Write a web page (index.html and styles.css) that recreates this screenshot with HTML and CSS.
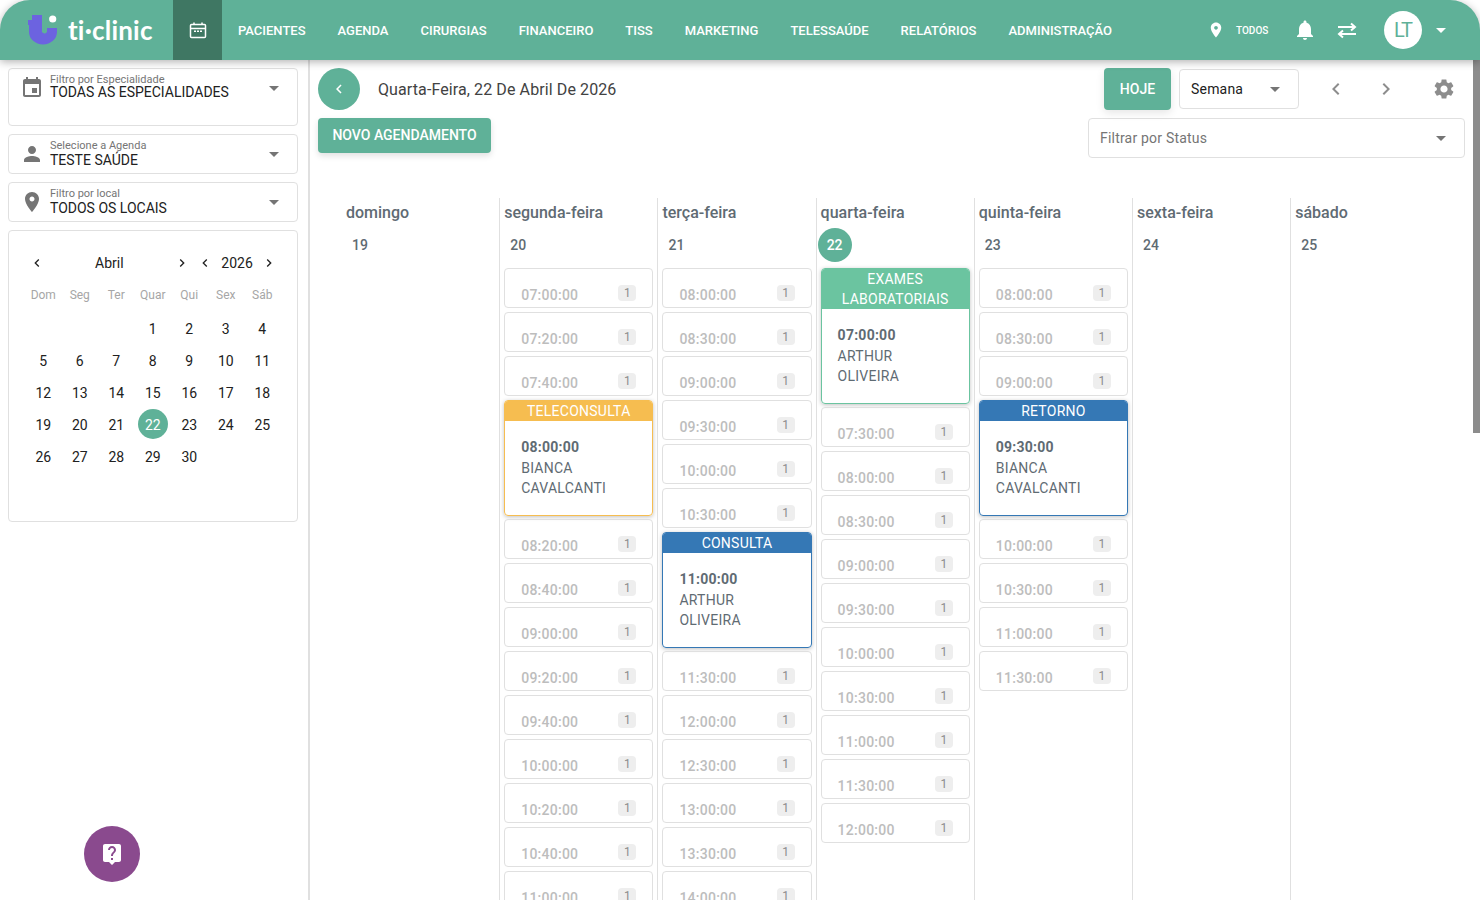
FILE: index.html
```html
<!DOCTYPE html>
<html lang="pt-BR">
<head>
<meta charset="utf-8">
<title>ti-clinic</title>
<link rel="stylesheet" href="styles.css">
</head>
<body>
<header class="topbar">
  <div class="brand">
    <svg class="brand-mark" width="30" height="30" viewBox="0 0 30 30"><path class="mark-p" d="M4 0h10v5h0v10a2.5 2.5 0 0 0 5 1.500v-3.500h10v4a14 12.500 0 0 1-28 0v-7h-1v-5h4z"/><circle class="mark-w" cx="24.700" cy="4" r="3.600"/></svg>
    <span class="brand-name">ti·clinic</span>
  </div>
  <a class="nav-cal"><svg width="20" height="20" viewBox="0 0 20 20"><path class="cal-line" d="M3.500 4.500h13a1 1 0 0 1 1 1v11a1 1 0 0 1-1 1h-13a1 1 0 0 1-1-1v-11a1 1 0 0 1 1-1zM3 8.500h14M6 2.500v2M14 2.500v2"/><path class="cal-dots" d="M6 10.500h2v1.500h-2zM9 10.500h2v1.500h-2zM12 10.500h2v1.500h-2z"/></svg></a>
  <nav class="nav">
    <a>PACIENTES</a><a>AGENDA</a><a>CIRURGIAS</a><a>FINANCEIRO</a><a>TISS</a><a>MARKETING</a><a>TELESSAÚDE</a><a>RELATÓRIOS</a><a>ADMINISTRAÇÃO</a>
  </nav>
  <div class="top-tools">
    <svg class="ic-white" width="18" height="18" viewBox="0 0 24 24"><path d="M12 2C8.130 2 5 5.130 5 9c0 5.250 7 13 7 13s7-7.750 7-13c0-3.870-3.130-7-7-7zm0 9.500c-1.380 0-2.500-1.120-2.500-2.500s1.120-2.500 2.500-2.500 2.500 1.120 2.500 2.500-1.120 2.500-2.500 2.500z"/></svg>
    <span class="place-label">TODOS</span>
    <svg class="ic-white bell" width="24" height="24" viewBox="0 0 24 24"><path d="M12 22c1.100 0 2-.9 2-2h-4c0 1.100.89 2 2 2zm6-6v-5c0-3.070-1.640-5.640-4.500-6.320V4c0-.83-.67-1.500-1.500-1.500s-1.500.67-1.500 1.500v.68C7.630 5.360 6 7.920 6 11v5l-2 2v1h16v-1l-2-2z"/></svg>
    <svg class="swap" width="24" height="24" viewBox="0 0 24 24"><path d="M3 9h16M16 5.500l4 3.500-4 3.500M21 16H5M8 12.500L4 16l4 3.500"/></svg>
    <div class="avatar">LT</div>
    <svg class="ic-white caret-top" width="10" height="5" viewBox="0 0 10 5"><path d="M0 0h10L5 5z"/></svg>
  </div>
</header>

<div class="layout">
  <aside class="sidebar">
    <div class="field field-tall">
      <svg class="ic-gray" width="24" height="24" viewBox="0 0 24 24"><path d="M17 12h-5v5h5v-5zM16 1v2H8V1H6v2H5c-1.110 0-1.990.9-1.990 2L3 19c0 1.100.89 2 2 2h14c1.100 0 2-.9 2-2V5c0-1.100-.9-2-2-2h-1V1h-2zm3 18H5V8h14v11z"/></svg>
      <div class="field-text"><div class="field-label">Filtro por Especialidade</div><div class="field-value value-tight">TODAS AS ESPECIALIDADES</div></div>
      <svg class="ic-gray field-caret" width="10" height="5" viewBox="0 0 10 5"><path d="M0 0h10L5 5z"/></svg>
    </div>
    <div class="field">
      <svg class="ic-gray" width="24" height="24" viewBox="0 0 24 24"><path d="M12 12c2.210 0 4-1.790 4-4s-1.790-4-4-4-4 1.790-4 4 1.790 4 4 4zm0 2c-2.670 0-8 1.340-8 4v2h16v-2c0-2.660-5.330-4-8-4z"/></svg>
      <div class="field-text"><div class="field-label">Selecione a Agenda</div><div class="field-value">TESTE SAÚDE</div></div>
      <svg class="ic-gray field-caret" width="10" height="5" viewBox="0 0 10 5"><path d="M0 0h10L5 5z"/></svg>
    </div>
    <div class="field">
      <svg class="ic-gray" width="24" height="24" viewBox="0 0 24 24"><path d="M12 2C8.130 2 5 5.130 5 9c0 5.250 7 13 7 13s7-7.750 7-13c0-3.870-3.130-7-7-7zm0 9.500c-1.380 0-2.500-1.120-2.500-2.500s1.120-2.500 2.500-2.500 2.500 1.120 2.500 2.500-1.120 2.500-2.500 2.500z"/></svg>
      <div class="field-text"><div class="field-label">Filtro por local</div><div class="field-value">TODOS OS LOCAIS</div></div>
      <svg class="ic-gray field-caret" width="10" height="5" viewBox="0 0 10 5"><path d="M0 0h10L5 5z"/></svg>
    </div>

    <div class="mini-cal">
      <div class="mini-head">
        <div class="mini-month">
          <svg class="ic-dark" width="16" height="16" viewBox="0 0 24 24"><path d="M15.410 7.410L14 6l-6 6 6 6 1.410-1.410L10.830 12z"/></svg>
          <span>Abril</span>
          <svg class="ic-dark" width="16" height="16" viewBox="0 0 24 24"><path d="M10 6L8.590 7.410 13.170 12l-4.580 4.590L10 18l6-6z"/></svg>
        </div>
        <div class="mini-year">
          <svg class="ic-dark" width="16" height="16" viewBox="0 0 24 24"><path d="M15.410 7.410L14 6l-6 6 6 6 1.410-1.410L10.830 12z"/></svg>
          <span>2026</span>
          <svg class="ic-dark" width="16" height="16" viewBox="0 0 24 24"><path d="M10 6L8.590 7.410 13.170 12l-4.580 4.590L10 18l6-6z"/></svg>
        </div>
      </div>
      <div class="mini-week"><span>Dom</span><span>Seg</span><span>Ter</span><span>Quar</span><span>Qui</span><span>Sex</span><span>Sáb</span></div>
      <div class="mini-days">
        <span></span><span></span><span></span><span>1</span><span>2</span><span>3</span><span>4</span>
        <span>5</span><span>6</span><span>7</span><span>8</span><span>9</span><span>10</span><span>11</span>
        <span>12</span><span>13</span><span>14</span><span>15</span><span>16</span><span>17</span><span>18</span>
        <span>19</span><span>20</span><span>21</span><span class="sel"><b>22</b></span><span>23</span><span>24</span><span>25</span>
        <span>26</span><span>27</span><span>28</span><span>29</span><span>30</span>
      </div>
    </div>
  </aside>

  <main class="main">
    <div class="toolbar">
      <div class="tool-left">
        <div class="date-row">
          <div class="back"><svg class="ic-white" width="18" height="18" viewBox="0 0 24 24"><path d="M15.410 7.410L14 6l-6 6 6 6 1.410-1.410L10.830 12z"/></svg></div>
          <span class="date-text">Quarta-Feira, 22 De Abril De 2026</span>
        </div>
        <button class="btn-new">NOVO AGENDAMENTO</button>
      </div>
      <div class="tool-right">
        <div class="tool-row">
          <button class="btn-today">HOJE</button>
          <div class="select-view"><span>Semana</span><svg class="ic-gray" width="10" height="5" viewBox="0 0 10 5"><path d="M0 0h10L5 5z"/></svg></div>
          <svg class="ic-mid chev-a" width="24" height="24" viewBox="0 0 24 24"><path d="M15.410 7.410L14 6l-6 6 6 6 1.410-1.410L10.830 12z"/></svg>
          <svg class="ic-mid chev-b" width="24" height="24" viewBox="0 0 24 24"><path d="M10 6L8.590 7.410 13.170 12l-4.580 4.590L10 18l6-6z"/></svg>
          <svg class="ic-mid gear" width="24" height="24" viewBox="0 0 24 24"><path d="M19.140 12.940c.04-.3.06-.61.06-.94 0-.32-.02-.64-.07-.94l2.030-1.580c.18-.14.23-.41.12-.61l-1.920-3.320c-.12-.22-.37-.29-.59-.22l-2.390.96c-.5-.38-1.030-.7-1.620-.94l-.36-2.540c-.04-.24-.24-.41-.48-.41h-3.840c-.24 0-.43.17-.47.41l-.36 2.540c-.59.24-1.130.57-1.620.94l-2.390-.96c-.22-.08-.47 0-.59.22L2.740 8.870c-.12.21-.08.47.12.61l2.030 1.580c-.05.3-.09.63-.09.94s.02.64.07.94l-2.030 1.580c-.18.14-.23.41-.12.61l1.920 3.320c.12.22.37.29.59.22l2.390-.96c.5.38 1.030.7 1.620.94l.36 2.540c.05.24.24.41.48.41h3.840c.24 0 .44-.17.47-.41l.36-2.540c.59-.24 1.130-.56 1.620-.94l2.390.96c.22.08.47 0 .59-.22l1.920-3.320c.12-.22.07-.47-.12-.61l-2.010-1.580zM12 15.600c-1.980 0-3.600-1.620-3.600-3.600s1.620-3.600 3.600-3.600 3.600 1.620 3.600 3.600-1.620 3.600-3.600 3.600z"/></svg>
        </div>
        <div class="select-status"><span>Filtrar por Status</span><svg class="ic-gray" width="10" height="5" viewBox="0 0 10 5"><path d="M0 0h10L5 5z"/></svg></div>
      </div>
    </div>

    <div class="week">
      <section class="day first">
        <h3>domingo</h3><div class="num">19</div>
      </section>
      <section class="day">
        <h3>segunda-feira</h3><div class="num">20</div>
        <div class="slot"><span class="t">07:00:00</span><span class="n">1</span></div>
        <div class="slot"><span class="t">07:20:00</span><span class="n">1</span></div>
        <div class="slot"><span class="t">07:40:00</span><span class="n">1</span></div>
        <article class="event tele"><header>TELECONSULTA</header><div class="ev-body"><strong>08:00:00</strong><p>BIANCA<br>CAVALCANTI</p></div></article>
        <div class="slot"><span class="t">08:20:00</span><span class="n">1</span></div>
        <div class="slot"><span class="t">08:40:00</span><span class="n">1</span></div>
        <div class="slot"><span class="t">09:00:00</span><span class="n">1</span></div>
        <div class="slot"><span class="t">09:20:00</span><span class="n">1</span></div>
        <div class="slot"><span class="t">09:40:00</span><span class="n">1</span></div>
        <div class="slot"><span class="t">10:00:00</span><span class="n">1</span></div>
        <div class="slot"><span class="t">10:20:00</span><span class="n">1</span></div>
        <div class="slot"><span class="t">10:40:00</span><span class="n">1</span></div>
        <div class="slot"><span class="t">11:00:00</span><span class="n">1</span></div>
      </section>
      <section class="day">
        <h3>terça-feira</h3><div class="num">21</div>
        <div class="slot"><span class="t">08:00:00</span><span class="n">1</span></div>
        <div class="slot"><span class="t">08:30:00</span><span class="n">1</span></div>
        <div class="slot"><span class="t">09:00:00</span><span class="n">1</span></div>
        <div class="slot"><span class="t">09:30:00</span><span class="n">1</span></div>
        <div class="slot"><span class="t">10:00:00</span><span class="n">1</span></div>
        <div class="slot"><span class="t">10:30:00</span><span class="n">1</span></div>
        <article class="event blue"><header>CONSULTA</header><div class="ev-body"><strong>11:00:00</strong><p>ARTHUR<br>OLIVEIRA</p></div></article>
        <div class="slot"><span class="t">11:30:00</span><span class="n">1</span></div>
        <div class="slot"><span class="t">12:00:00</span><span class="n">1</span></div>
        <div class="slot"><span class="t">12:30:00</span><span class="n">1</span></div>
        <div class="slot"><span class="t">13:00:00</span><span class="n">1</span></div>
        <div class="slot"><span class="t">13:30:00</span><span class="n">1</span></div>
        <div class="slot"><span class="t">14:00:00</span><span class="n">1</span></div>
      </section>
      <section class="day">
        <h3>quarta-feira</h3><div class="num today">22</div>
        <article class="event lab"><header>EXAMES<br>LABORATORIAIS</header><div class="ev-body"><strong>07:00:00</strong><p>ARTHUR<br>OLIVEIRA</p></div></article>
        <div class="slot"><span class="t">07:30:00</span><span class="n">1</span></div>
        <div class="slot"><span class="t">08:00:00</span><span class="n">1</span></div>
        <div class="slot"><span class="t">08:30:00</span><span class="n">1</span></div>
        <div class="slot"><span class="t">09:00:00</span><span class="n">1</span></div>
        <div class="slot"><span class="t">09:30:00</span><span class="n">1</span></div>
        <div class="slot"><span class="t">10:00:00</span><span class="n">1</span></div>
        <div class="slot"><span class="t">10:30:00</span><span class="n">1</span></div>
        <div class="slot"><span class="t">11:00:00</span><span class="n">1</span></div>
        <div class="slot"><span class="t">11:30:00</span><span class="n">1</span></div>
        <div class="slot"><span class="t">12:00:00</span><span class="n">1</span></div>
      </section>
      <section class="day">
        <h3>quinta-feira</h3><div class="num">23</div>
        <div class="slot"><span class="t">08:00:00</span><span class="n">1</span></div>
        <div class="slot"><span class="t">08:30:00</span><span class="n">1</span></div>
        <div class="slot"><span class="t">09:00:00</span><span class="n">1</span></div>
        <article class="event blue"><header>RETORNO</header><div class="ev-body"><strong>09:30:00</strong><p>BIANCA<br>CAVALCANTI</p></div></article>
        <div class="slot"><span class="t">10:00:00</span><span class="n">1</span></div>
        <div class="slot"><span class="t">10:30:00</span><span class="n">1</span></div>
        <div class="slot"><span class="t">11:00:00</span><span class="n">1</span></div>
        <div class="slot"><span class="t">11:30:00</span><span class="n">1</span></div>
      </section>
      <section class="day">
        <h3>sexta-feira</h3><div class="num">24</div>
      </section>
      <section class="day">
        <h3>sábado</h3><div class="num">25</div>
      </section>
    </div>
  </main>
</div>

<div class="scroll-thumb"></div>
<div class="fab"><svg class="ic-white" width="24" height="24" viewBox="0 0 24 24"><path d="M19 2H5c-1.110 0-2 .9-2 2v14c0 1.100.89 2 2 2h4l3 3 3-3h4c1.100 0 2-.9 2-2V4c0-1.100-.9-2-2-2zm-6 16h-2v-2h2v2zm2.070-7.750l-.9.92C13.450 11.900 13 12.500 13 14h-2v-.5c0-1.100.45-2.100 1.170-2.830l1.240-1.260c.37-.36.59-.86.59-1.410 0-1.100-.9-2-2-2s-2 .9-2 2H8c0-2.210 1.790-4 4-4s4 1.790 4 4c0 .88-.36 1.680-.93 2.250z"/></svg></div>
</body>
</html>
```

FILE: styles.css
```css
* { box-sizing: border-box; }
html, body { margin: 0; height: 100%; }
body {
  position: relative;
  height: 900px;
  overflow: hidden;
  background: #fff;
  font-family: Roboto, "Liberation Sans", sans-serif;
  color: #212121;
  display: flex;
  flex-direction: column;
}
svg { display: block; flex: none; }
.ic-white { fill: #fff; }
.ic-gray { fill: #757575; }
.ic-dark { fill: #212121; }
.ic-mid { fill: #8d8d8d; }

/* top bar */
.topbar {
  position: relative;
  z-index: 3;
  flex: none;
  height: 60px;
  display: flex;
  align-items: center;
  background: #5fb198;
  border-radius: 30px 30px 0 0;
  box-shadow: 0 2px 8px rgba(0, 0, 0, .3);
}
.brand { width: 173px; display: flex; align-items: center; padding-left: 28px; }
.brand-mark { margin-top: 0; }
.mark-p { fill: #6c63e0; }
.mark-w { fill: #fff; }
.brand-name {
  margin-left: 10px;
  font-family: Lato, "Noto Sans", sans-serif;
  font-weight: 700;
  font-size: 26px;
  letter-spacing: .2px;
  color: #fff;
  line-height: 30px;
}
.nav-cal {
  width: 49px;
  height: 60px;
  display: flex;
  align-items: center;
  justify-content: center;
  background: #3f7763;
}
.cal-line { fill: none; stroke: #fff; stroke-width: 1.500; }
.cal-dots { fill: #fff; }
.nav { display: flex; padding-left: 16px; gap: 32px; }
.nav a { font-size: 13px; font-weight: 500; color: #fff; white-space: nowrap; }
.top-tools { margin-left: auto; display: flex; align-items: center; padding-right: 34px; }
.place-label { margin-left: 11px; width: 33px; font-size: 10px; font-weight: 500; color: #fff; white-space: nowrap; }
.bell { margin-left: 24px; }
.swap { margin-left: 18px; fill: none; stroke: #fff; stroke-width: 2; }
.avatar {
  margin-left: 25px;
  width: 38px;
  height: 38px;
  border-radius: 50%;
  background: #fff;
  color: #5fb198;
  font-size: 20px;
  line-height: 38px;
  text-align: center;
  letter-spacing: -1px;
}
.caret-top { margin-left: 14px; }

/* layout */
.layout { flex: 1; min-height: 0; display: flex; }
.sidebar {
  flex: none;
  width: 310px;
  border-right: 2px solid #e0e0e0;
  padding: 8px 10px 0 8px;
  display: flex;
  flex-direction: column;
  gap: 8px;
}

/* sidebar fields */
.field {
  height: 40px;
  border: 1px solid #e0e0e0;
  border-radius: 4px;
  display: flex;
  align-items: flex-start;
  padding: 7px 18px 0 11px;
}
.field-tall { height: 58px; }
.field-text { flex: 1; margin: -2px 0 0 6px; }
.field-label { font-size: 11px; line-height: 12px; color: #757575; }
.field-value { font-size: 14px; line-height: 16px; margin-top: 0; color: #212121; }
.value-tight { line-height: 12px; margin-top: 0; }
.field-caret { margin-top: 10px; }

/* mini calendar */
.mini-cal {
  height: 292px;
  border: 1px solid #e0e0e0;
  border-radius: 4px;
  padding: 24px 16px 0;
}
.mini-head { display: flex; gap: 7.500px; padding: 0 4px; height: 16px; }
.mini-month, .mini-year {
  display: flex;
  align-items: center;
  justify-content: space-between;
  font-size: 14px;
  line-height: 16px;
}
.mini-month { width: 161px; }
.mini-year { width: 80px; }
.mini-week, .mini-days { display: grid; grid-template-columns: repeat(7, 36.500px); }
.mini-week { margin-top: 16px; height: 18px; }
.mini-week span { font-size: 12px; line-height: 16px; color: #a6a6a6; text-align: center; }
.mini-days { margin-top: 8px; grid-auto-rows: 32px; }
.mini-days span { font-size: 14px; line-height: 32px; text-align: center; }
.mini-days .sel { display: flex; justify-content: center; }
.mini-days .sel b {
  width: 30px;
  height: 30px;
  margin-top: 0;
  border-radius: 50%;
  background: #5fb198;
  color: #fff;
  font-weight: 400;
  line-height: 32px;
}

/* main */
.main { flex: 1; min-width: 0; padding: 8px 15px 0 8px; overflow: hidden; }
.toolbar { display: flex; justify-content: space-between; align-items: flex-start; }
.date-row { display: flex; align-items: center; height: 42px; margin-bottom: 8px; }
.back {
  width: 42px;
  height: 42px;
  border-radius: 50%;
  background: #5fb198;
  display: flex;
  align-items: center;
  justify-content: center;
}
.date-text { margin-left: 18px; font-size: 16px; color: #424242; letter-spacing: .1px; }
.btn-new {
  display: block;
  width: 173px;
  height: 35px;
  padding: 0;
  border: 0;
  border-radius: 4px;
  background: #5fb198;
  color: #fff;
  font: 500 14px/35px Roboto, sans-serif;
  box-shadow: 0 3px 6px rgba(0, 0, 0, .12);
}
.tool-right { width: 377px; }
.tool-row { display: flex; align-items: center; height: 42px; margin-bottom: 8px; padding-left: 16px; }
.btn-today {
  width: 67px;
  height: 42px;
  padding: 0;
  border: 0;
  border-radius: 4px;
  background: #5fb198;
  color: #fff;
  font: 500 14px/42px Roboto, sans-serif;
  box-shadow: 0 3px 8px rgba(0, 0, 0, .1);
}
.select-view, .select-status {
  display: flex;
  align-items: center;
  justify-content: space-between;
  height: 40px;
  border: 1px solid #e0e0e0;
  border-radius: 4px;
  font-size: 14px;
  letter-spacing: .2px;
}
.select-view { margin-left: 8px; width: 120px; padding: 0 18px 0 11px; color: #212121; }
.select-status { padding: 0 18px 0 11px; color: #757575; }
.chev-a { margin-left: 25px; }
.chev-b { margin-left: 26px; }
.gear { margin-left: 34px; }

/* week */
.week {
  margin: 40px 0 0 23px;
  width: 1107.400px;
  display: grid;
  grid-template-columns: repeat(7, 1fr);
}
.day { border-left: 1px solid #e0e0e0; padding: 0 4px; height: 702px; overflow: hidden; }
.day.first { border-left-color: transparent; }
.day h3 {
  margin: 0;
  height: 30px;
  font-size: 16px;
  font-weight: 500;
  line-height: 30px;
  color: #5f6b73;
  white-space: nowrap;
}
.num {
  width: 34px;
  height: 34px;
  margin: 0 0 6px -3px;
  border-radius: 50%;
  font-size: 14px;
  font-weight: 500;
  line-height: 34px;
  text-align: center;
  color: #5f6b73;
}
.num.today { background: #5fb198; color: #fff; }

.slot {
  height: 40px;
  margin-bottom: 4px;
  padding: 0 16px;
  border: 1px solid #e0e0e0;
  border-radius: 4px;
  display: flex;
  justify-content: space-between;
  align-items: flex-start;
}
.t { margin-top: 17px; font-size: 14px; font-weight: 500; line-height: 18px; letter-spacing: .25px; color: #bdbdbd; }
.n {
  margin-top: 16px;
  width: 18px;
  height: 16px;
  border-radius: 4px;
  background: #eee;
  font-size: 12px;
  line-height: 16px;
  text-align: center;
  color: #8c8c8c;
}

.event {
  margin-bottom: 3px;
  border: 1px solid;
  border-radius: 4px;
  overflow: hidden;
  box-shadow: 0 1px 4px rgba(0, 0, 0, .25);
}
.event header {
  color: #fff;
  font-size: 14px;
  line-height: 20px;
  text-align: center;
  letter-spacing: .25px;
}
.ev-body { padding: 16px 16px 17px; font-size: 14px; line-height: 20px; color: #5f6b73; letter-spacing: .25px; }
.ev-body strong { display: block; font-weight: 700; }
.ev-body p { margin: 1px 0 0; }
.tele { border-color: #f6bd50; }
.tele header { background: #f6bd50; }
.blue { border-color: #3578b5; }
.blue header { background: #3578b5; }
.lab { border-color: #6bc4a0; }
.lab header { background: #6bc4a0; }

/* overlays */
.scroll-thumb {
  position: absolute;
  top: 60px;
  right: 0;
  width: 7px;
  height: 373px;
  background: #8c8c8c;
}
.fab {
  position: absolute;
  left: 84px;
  top: 826px;
  width: 56px;
  height: 56px;
  border-radius: 50%;
  background: #8a4a8e;
  display: flex;
  align-items: center;
  justify-content: center;
}
```
